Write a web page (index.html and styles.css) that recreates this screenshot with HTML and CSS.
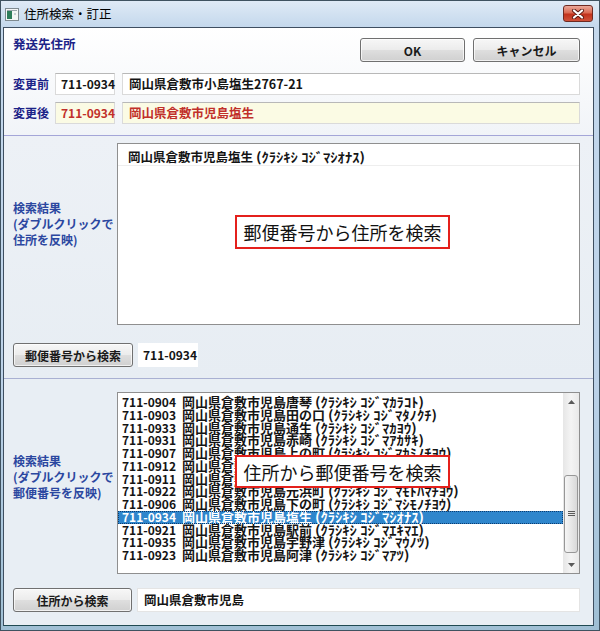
FILE: index.html
```html
<!DOCTYPE html>
<html lang="ja">
<head>
<meta charset="utf-8">
<title>住所検索・訂正</title>
<link rel="stylesheet" href="styles.css">
</head>
<body>
<div class="window">
  <div class="titlebar">
    <svg class="ticon" width="14" height="13" viewBox="0 0 14 13">
      <rect x="0.5" y="0.5" width="13" height="12" fill="#f4f6f6" stroke="#7f8a90"/>
      <rect x="2" y="3" width="5" height="8" fill="#2e7d5a"/>
      <rect x="2" y="2" width="10" height="1" fill="#9aa6ac"/>
      <rect x="9" y="5" width="2" height="2" fill="#c8d0d4"/>
    </svg>
    <span class="title">住所検索・訂正</span>
    <div class="close">
      <svg width="14" height="10" viewBox="0 0 14 10">
        <path d="M3 1.5 L11 8.5 M11 1.5 L3 8.5" stroke="#5a1a12" stroke-width="4" stroke-linecap="round"/>
        <path d="M3 1.5 L11 8.5 M11 1.5 L3 8.5" stroke="#ffffff" stroke-width="2.2" stroke-linecap="round"/>
      </svg>
    </div>
  </div>
  <div class="client">
    <section class="sec sec1">
      <div class="row-top">
        <div class="label head">発送先住所</div>
        <div class="btns">
          <button class="btn ok">OK</button>
          <button class="btn cancel">キャンセル</button>
        </div>
      </div>
      <div class="row-field">
        <div class="label lab3">変更前</div>
        <div class="field zip">711-0934</div>
        <div class="field addr">岡山県倉敷市小島塩生2767-21</div>
      </div>
      <div class="row-field after">
        <div class="label lab3">変更後</div>
        <div class="field zip">711-0934</div>
        <div class="field addr">岡山県倉敷市児島塩生</div>
      </div>
    </section>
    <section class="sec sec2">
      <div class="res">
        <div class="label side s2">検索結果<br>(ダブルクリックで<br>住所を反映)</div>
        <div class="list list1">
          <div class="item1">岡山県倉敷市児島塩生 <span class="kana">(ｸﾗｼｷｼ ｺｼﾞﾏｼｵﾅｽ)</span></div>
          <div class="callout c1">郵便番号から住所を検索</div>
        </div>
      </div>
      <div class="row-search">
        <button class="btn search">郵便番号から検索</button>
        <div class="field zip plain">711-0934</div>
      </div>
    </section>
    <section class="sec sec3">
      <div class="res">
        <div class="label side s3">検索結果<br>(ダブルクリックで<br>郵便番号を反映)</div>
        <div class="list list2">
          <div class="items">
            <div class="it"><span class="z">711-0904</span><span>岡山県倉敷市児島唐琴 <span class="kana">(ｸﾗｼｷｼ ｺｼﾞﾏｶﾗｺﾄ)</span></span></div>
            <div class="it"><span class="z">711-0903</span><span>岡山県倉敷市児島田の口 <span class="kana">(ｸﾗｼｷｼ ｺｼﾞﾏﾀﾉｸﾁ)</span></span></div>
            <div class="it"><span class="z">711-0933</span><span>岡山県倉敷市児島通生 <span class="kana">(ｸﾗｼｷｼ ｺｼﾞﾏｶﾖｳ)</span></span></div>
            <div class="it"><span class="z">711-0931</span><span>岡山県倉敷市児島赤崎 <span class="kana">(ｸﾗｼｷｼ ｺｼﾞﾏｱｶｻｷ)</span></span></div>
            <div class="it"><span class="z">711-0907</span><span>岡山県倉敷市児島上の町 <span class="kana">(ｸﾗｼｷｼ ｺｼﾞﾏｶﾐﾉﾁﾖｳ)</span></span></div>
            <div class="it"><span class="z">711-0912</span><span>岡山県倉敷市児島小川町</span></div>
            <div class="it"><span class="z">711-0911</span><span>岡山県倉敷市児島小川</span></div>
            <div class="it"><span class="z">711-0922</span><span>岡山県倉敷市児島元浜町 <span class="kana">(ｸﾗｼｷｼ ｺｼﾞﾏﾓﾄﾊﾏﾁﾖｳ)</span></span></div>
            <div class="it"><span class="z">711-0906</span><span>岡山県倉敷市児島下の町 <span class="kana">(ｸﾗｼｷｼ ｺｼﾞﾏｼﾓﾉﾁﾖｳ)</span></span></div>
            <div class="it sel"><span class="z">711-0934</span><span>岡山県倉敷市児島塩生 <span class="kana">(ｸﾗｼｷｼ ｺｼﾞﾏｼｵﾅｽ)</span></span></div>
            <div class="it"><span class="z">711-0921</span><span>岡山県倉敷市児島駅前 <span class="kana">(ｸﾗｼｷｼ ｺｼﾞﾏｴｷﾏｴ)</span></span></div>
            <div class="it"><span class="z">711-0935</span><span>岡山県倉敷市児島宇野津 <span class="kana">(ｸﾗｼｷｼ ｺｼﾞﾏｳﾉﾂ)</span></span></div>
            <div class="it"><span class="z">711-0923</span><span>岡山県倉敷市児島阿津 <span class="kana">(ｸﾗｼｷｼ ｺｼﾞﾏｱﾂ)</span></span></div>
          </div>
          <div class="sb">
            <div class="sb-btn"><svg width="7" height="4" viewBox="0 0 7 4"><path d="M0 4 L3.5 0 L7 4 Z" fill="#5a5a5a"/></svg></div>
            <div class="sb-track">
              <div class="thumb"><svg width="7" height="6" viewBox="0 0 7 6"><path d="M0 0.5 H7 M0 2.5 H7 M0 4.5 H7" stroke="#5a5a5a" stroke-width="1"/></svg></div>
            </div>
            <div class="sb-btn"><svg width="7" height="4" viewBox="0 0 7 4"><path d="M0 0 L3.5 4 L7 0 Z" fill="#5a5a5a"/></svg></div>
          </div>
          <div class="callout c2">住所から郵便番号を検索</div>
        </div>
      </div>
      <div class="row-search">
        <button class="btn search s3btn">住所から検索</button>
        <div class="field addr plain wide">岡山県倉敷市児島</div>
      </div>
    </section>
  </div>
</div>
</body>
</html>
```
FILE: styles.css
```css
body {
  margin: 0;
  font-family: "Noto Sans CJK JP", "Noto Sans", sans-serif;
  background: #ffffff;
}

.window {
  width: 600px;
  height: 631px;
  box-sizing: border-box;
  border: 1px solid #3f5260;
  background: linear-gradient(#dfeaf6 0px, #c4d8ec 26px, #bcd2e8 60%, #9fbfd4 100%);
  display: flex;
  flex-direction: column;
}

.titlebar {
  height: 26px;
  display: flex;
  align-items: center;
  padding-left: 4px;
  flex-shrink: 0;
}

.ticon {
  display: block;
  margin-top: 1px;
}

.title {
  margin-left: 5px;
  font-size: 12.5px;
  line-height: 14px;
  color: #000;
}

.close {
  margin-left: auto;
  margin-right: 6px;
  align-self: flex-start;
  margin-top: 4px;
  width: 30px;
  height: 17px;
  box-sizing: border-box;
  border: 1px solid #6e2a22;
  border-radius: 3px;
  background: linear-gradient(#eaa89a 0%, #db6a52 45%, #c2321c 55%, #d0523a 100%);
  display: flex;
  align-items: center;
  justify-content: center;
}
.close svg { display: block; }

.client {
  margin-left: 2px;
  width: 591px;
  height: 599px;
  box-sizing: border-box;
  border: 1px solid #3e4e60;
  border-bottom-color: #1f4a52;
  background: #e8eef4;
  display: flex;
  flex-direction: column;
  flex-shrink: 0;
}

.sec {
  box-sizing: border-box;
  padding: 0 13px 0 9px;
}

.sec1 {
  height: 108px;
  padding-top: 10px;
  border-bottom: 1px solid #a4a6d8;
  background: linear-gradient(#ffffff, #f1f4f8);
}

.label {
  font-size: 12px;
  font-weight: bold;
  color: #1c2388;
}

.row-top {
  display: flex;
  justify-content: space-between;
  align-items: flex-start;
  height: 24px;
}

.head {
  margin-top: -1px;
  line-height: 14px;
  font-size: 12.5px;
}

.btns {
  display: flex;
  gap: 8px;
}

.btn {
  height: 24px;
  box-sizing: border-box;
  border: 1px solid #707070;
  border-radius: 3px;
  background: linear-gradient(#f7f7f7 0%, #ececec 48%, #dedede 52%, #d0d0d0 100%);
  font-family: "Noto Sans CJK JP", "Noto Sans", sans-serif;
  font-size: 12px;
  font-weight: bold;
  color: #1a1a1a;
  padding: 0;
  box-shadow: inset 0 0 0 1px rgba(255,255,255,0.7);
}
.ok { width: 105px; }
.cancel { width: 107px; }

.row-field {
  display: flex;
  align-items: center;
  height: 22px;
  margin-top: 11px;
}
.row-field.after { margin-top: 7px; }

.lab3 {
  width: 42px;
  flex-shrink: 0;
  line-height: 14px;
}

.field {
  height: 22px;
  box-sizing: border-box;
  border: 1px solid #dadada;
  border-top-color: #b8b8b8;
  background: #ffffff;
  font-size: 12px;
  line-height: 20px;
  padding-left: 5px;
  font-weight: bold;
  color: #151515;
  white-space: nowrap;
}
.zip { width: 60px; flex-shrink: 0; }
.addr { flex: 1; margin-left: 7px; padding-left: 6px; font-size: 12.5px; }
.after .field {
  background: #fbfbe4;
  color: #c1302a;
}

.sec2 {
  height: 243px;
  padding-top: 7px;
  border-bottom: 1px solid #a9b0d2;
  background: linear-gradient(#edf1f6, #e7edf3);
}

.res {
  display: flex;
  height: 182px;
}

.side {
  width: 104px;
  flex-shrink: 0;
  line-height: 16px;
  color: #2b47a0;
}
.s2 { margin-top: 57px; }
.s3 { margin-top: 61px; }

.list {
  flex: 1;
  position: relative;
  box-sizing: border-box;
  border: 1px solid #8f8f8f;
  background: #ffffff;
}

.list1 { padding-top: 2px; }

.item1 {
  font-size: 12.5px;
  line-height: 14px;
  padding: 4px 10px 1px;
  font-weight: bold;
  color: #151515;
  border-bottom: 1px solid #eeeeee;
  white-space: nowrap;
}

.kana {
  font-size: 13px;
  display: inline-block;
  transform: scaleX(1.12);
  transform-origin: left center;
}

.callout {
  position: absolute;
  left: 117px;
  width: 215px;
  box-sizing: border-box;
  border: 2px solid #e4201c;
  background: #ffffff;
  display: flex;
  align-items: center;
  justify-content: center;
  font-size: 18px;
  color: #111;
  font-weight: normal;
  white-space: nowrap;
}
.c1 { top: 71px; height: 34px; }
.c2 { top: 62px; height: 33px; }

.row-search {
  display: flex;
  height: 24px;
  margin-top: 18px;
}

.search { width: 120px; flex-shrink: 0; }

.plain {
  height: 24px;
  border: none;
  line-height: 24px;
  background: #ffffff;
}
.zip.plain { margin-left: 5px; }

.sec3 {
  flex: 1;
  padding-top: 13px;
  background: #e8eef4;
}
.sec3 .row-search { margin-top: 14px; }
.s3btn { width: 119px; }
.wide {
  margin-left: 5px;
  border: 1px solid #e4e4e4;
  line-height: 22px;
  padding-left: 6px;
}

.list2 {
  display: flex;
}

.items {
  flex: 1;
  padding-top: 3px;
  overflow: hidden;
}

.it {
  display: flex;
  white-space: nowrap;
  font-size: 13px;
  line-height: 12.75px;
  height: 12.75px;
  padding-left: 4px;
  font-weight: bold;
  color: #141414;
}
.it .z {
  width: 60px;
  flex-shrink: 0;
  font-size: 12px;
}
.it.sel {
  background: #2f86cc;
  color: #ffffff;
  outline: 1px dotted #0c3c70;
  outline-offset: -1px;
}

.sb {
  width: 16px;
  flex-shrink: 0;
  display: flex;
  flex-direction: column;
  background: linear-gradient(90deg, #e6e6e6, #f4f4f4 50%, #e9e9e9);
}

.sb-btn {
  height: 17px;
  display: flex;
  align-items: center;
  justify-content: center;
}
.sb-btn svg { display: block; }

.sb-track {
  flex: 1;
  padding-top: 65px;
}

.thumb {
  height: 78px;
  margin: 0 1px;
  box-sizing: border-box;
  border: 1px solid #979797;
  border-radius: 3px;
  background: linear-gradient(90deg, #f6f6f6, #e6e6e6 55%, #d8d8d8);
  display: flex;
  align-items: center;
  justify-content: center;
}
.thumb svg { display: block; }
```
